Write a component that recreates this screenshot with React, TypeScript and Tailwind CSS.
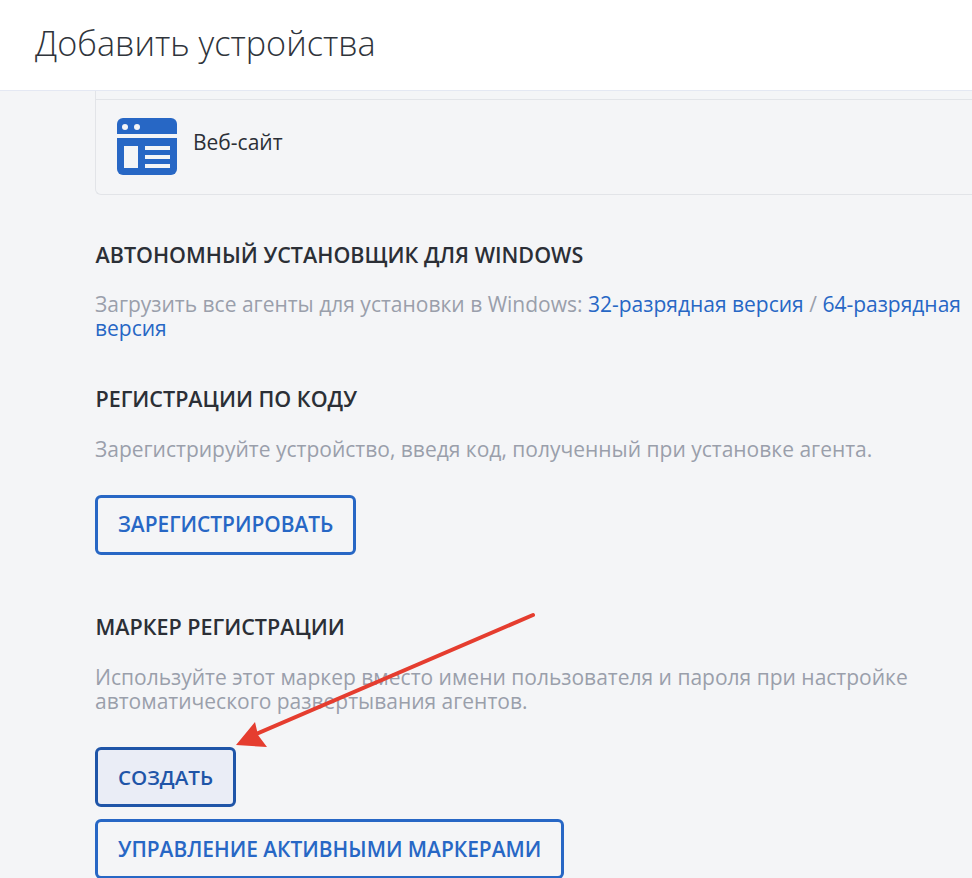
function SiteIcon() {
  return (
    <svg width="60" height="58" viewBox="0 0 60 58" className="shrink-0">
      <path d="M0 16V6a6 6 0 0 1 6-6h48a6 6 0 0 1 6 6v10z" fill="#2767c5" />
      <circle cx="8" cy="9" r="3" fill="#f4f5f7" />
      <circle cx="20" cy="9" r="3" fill="#f4f5f7" />
      <path d="M0 20h60v31a6 6 0 0 1-6 6H6a6 6 0 0 1-6-6z" fill="#2767c5" />
      <rect x="7" y="28" width="14" height="22" fill="#f4f5f7" />
      <rect x="28" y="28" width="25" height="4" fill="#f4f5f7" />
      <rect x="28" y="37" width="25" height="4" fill="#f4f5f7" />
      <rect x="28" y="46" width="25" height="4" fill="#f4f5f7" />
    </svg>
  );
}

function Heading({ children }: { children: React.ReactNode }) {
  return (
    <h2 className="pl-[0.5px] text-[21.5px] leading-[28px] font-semibold text-[#2b2f36]">
      {children}
    </h2>
  );
}

export default function App() {
  return (
    <div className="relative h-[878px] w-[972px] overflow-hidden bg-[#f4f5f7] font-['Open_Sans',sans-serif]">
      <header className="flex h-[91px] items-center border-b border-[#e4e8f3] bg-white pb-1 pl-[35px]">
        <h1 className="text-[34.2px] font-light text-[#2f343b]">
          Добавить устройства
        </h1>
      </header>

      <div className="pl-[95px]">
        <div className="h-[9px] border-b border-l border-[#e2e4e8]" />
        <div className="flex h-[95px] items-center gap-4 rounded-bl-md border-b border-l border-[#e2e4e8] pl-[21px]">
          <SiteIcon />
          <span className="mb-2 text-[21px] text-[#2b2f36]">Веб-сайт</span>
        </div>

        <section className="mt-[46px] w-[870px]">
          <Heading>АВТОНОМНЫЙ УСТАНОВЩИК ДЛЯ WINDOWS</Heading>
          <p className="mt-[23px] text-[21px] leading-6 text-[#9a9fab]">
            Загрузить все агенты для установки в Windows:{" "}
            <span className="text-[#2767c5]">32-разрядная версия</span> /{" "}
            <span className="text-[#2767c5]">64-разрядная версия</span>
          </p>
        </section>

        <section className="mt-[45px]">
          <Heading>РЕГИСТРАЦИИ ПО КОДУ</Heading>
          <p className="mt-6 text-[21px] leading-6 text-[#9a9fab]">
            Зарегистрируйте устройство, введя код, полученный при установке агента.
          </p>
          <button className="mt-[34px] h-[60px] rounded-md border-[3px] border-[#2767c5] px-5 text-[20.9px] font-semibold text-[#2767c5]">
            ЗАРЕГИСТРИРОВАТЬ
          </button>
        </section>

        <section className="mt-[58px]">
          <Heading>МАРКЕР РЕГИСТРАЦИИ</Heading>
          <p className="mt-6 w-[830px] text-[21px] leading-6 text-[#9a9fab]">
            Используйте этот маркер вместо имени пользователя и пароля при настройке
            автоматического развертывания агентов.
          </p>
          <div className="mt-[34px] flex flex-col items-start gap-3">
            <button className="h-[60px] w-[141px] rounded-md border-[3px] border-[#1f55a8] bg-[#eaedf6] text-[20.6px] font-semibold text-[#1f55a8]">
              СОЗДАТЬ
            </button>
            <button className="h-[60px] rounded-md border-[3px] border-[#2767c5] px-5 pt-0.5 text-[20.9px] font-semibold text-[#2767c5]">
              УПРАВЛЕНИЕ АКТИВНЫМИ МАРКЕРАМИ
            </button>
          </div>
        </section>
      </div>

      {/* red annotation arrow over the page */}
      <svg
        className="pointer-events-none absolute top-[610px] left-[230px]"
        width="310"
        height="145"
        viewBox="230 610 310 145"
      >
        <path d="M533 615 L254 735" stroke="#e53d2f" strokeWidth="4" strokeLinecap="round" fill="none" />
        <path d="M236 745 L255 722 L258 735 L267 747 Z" fill="#e53d2f" />
      </svg>
    </div>
  );
}
